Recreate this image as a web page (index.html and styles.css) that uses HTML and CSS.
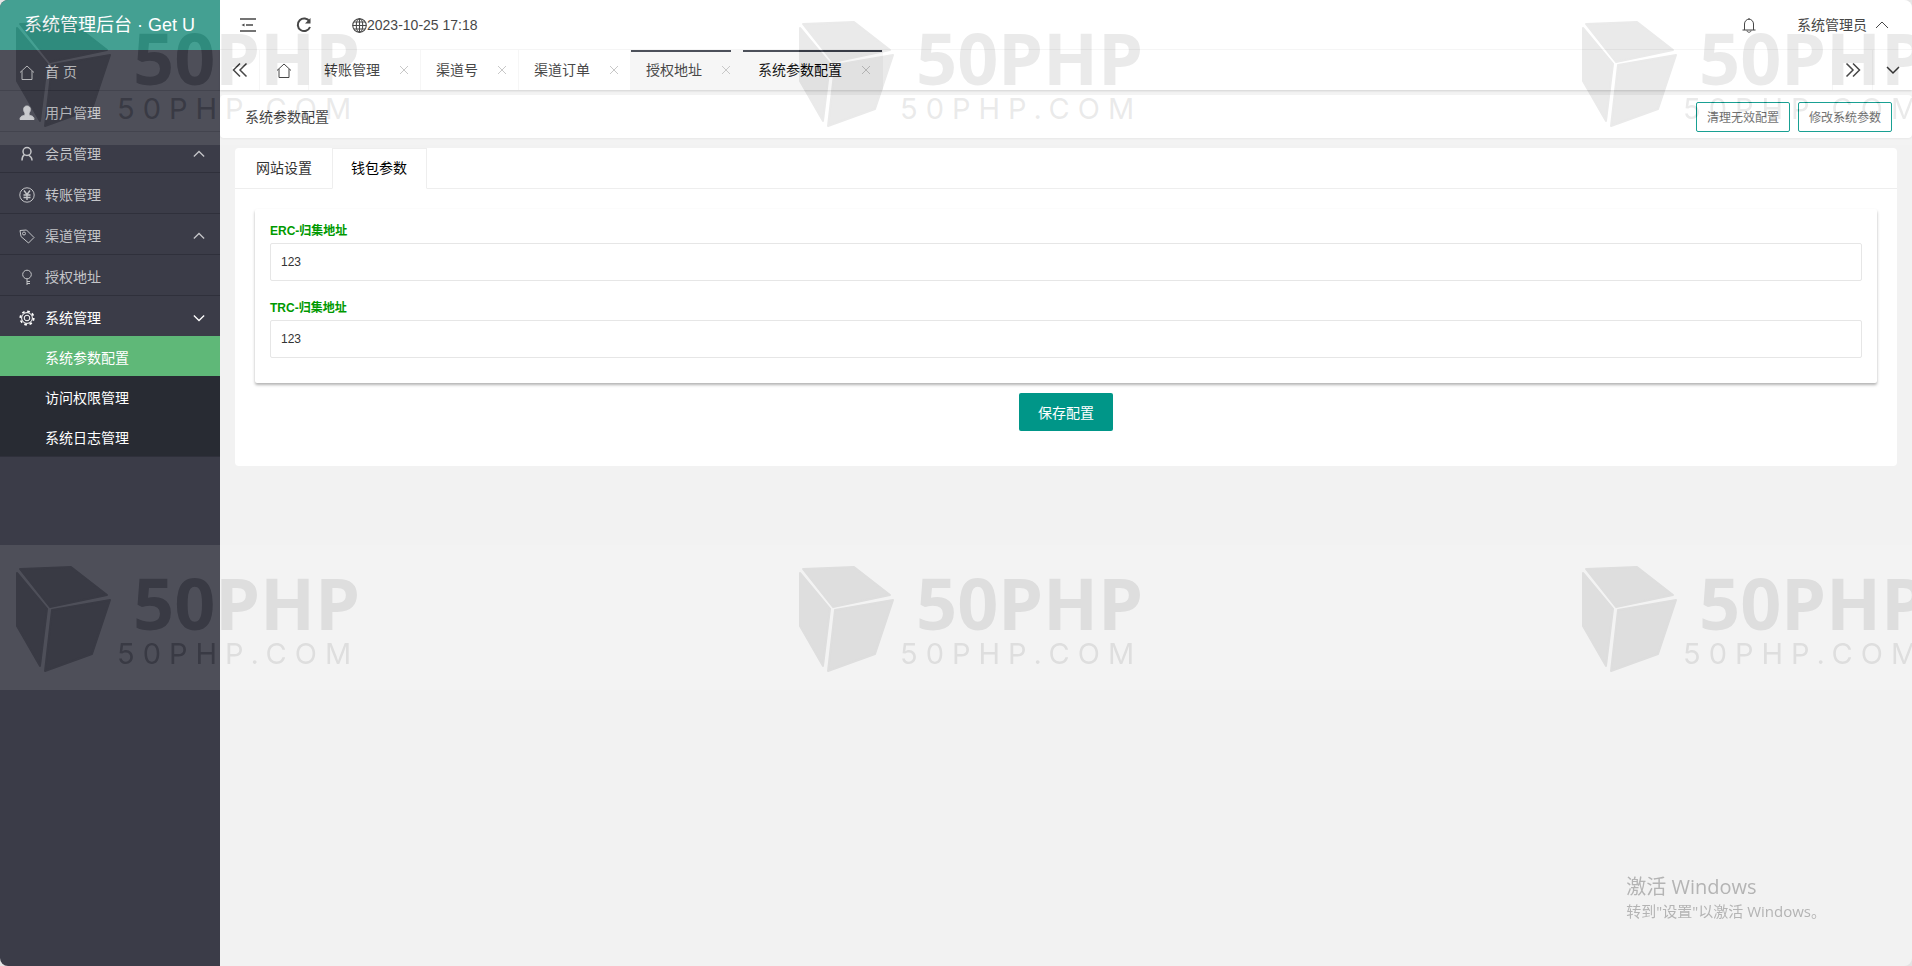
FILE: index.html
```html
<!DOCTYPE html>
<html lang="zh-CN">
<head>
    <meta charset="UTF-8">
    <meta name="viewport" content="width=device-width, initial-scale=1.0">
    <title>系统管理后台</title>
    <link rel="stylesheet" href="styles.css">
</head>
<body>
    <!-- 公用图形 -->
    <svg class="defs" aria-hidden="true">
        <symbol id="home" viewBox="0 0 16 16"><path d="M1 8.500 8 2l7 6.500M3 7v8.500h10V7"/></symbol>
        <symbol id="up" viewBox="0 0 14 14"><path d="M1 10l6-6 6 6"/></symbol>
        <symbol id="down" viewBox="0 0 14 14"><path d="M1 4l6 6 6-6"/></symbol>
        <symbol id="close" viewBox="0 0 10 10"><path d="M1 1l8 8M9 1L1 9"/></symbol>
        <symbol id="cube" viewBox="0 0 98 108">
            <path d="M5 4 56 2 92 30 35 42Z"/>
            <path d="M2 8 32 44 25 101 2 61Z"/>
            <path d="M37 45 95 35 77 89 30 106Z"/>
        </symbol>
    </svg>

    <div class="layout">
        <aside class="side">
            <div class="logo">系统管理后台 · Get U</div>
            <nav>
                <ul class="menu">
                    <li><a href="#"><svg class="icon"><use href="#home"/></svg>首 页</a></li>
                    <li><a href="#"><svg class="icon solid" viewBox="0 0 16 16" stroke="none"><path d="M8 1c2.300 0 3.300 1.500 3.300 3.500 0 1.700-.6 2.700-1.300 3.500v2.200c2 .5 5 .7 5 4.300H1c0-3.600 3-3.800 5-4.300V8C5.300 7.200 4.700 6.200 4.700 4.500c0-2 1-3.500 3.300-3.500z"/></svg>用户管理</a></li>
                    <li><a href="#"><svg class="icon bold" viewBox="0 0 16 16"><circle cx="8" cy="5.500" r="4"/><path d="M5.500 8.700C3.500 10 3 12 3 14.500M9.500 9.200C12 10.500 13 12 13 14.500"/></svg>会员管理<svg class="arrow"><use href="#up"/></svg></a></li>
                    <li><a href="#"><svg class="icon" viewBox="0 0 16 16"><circle cx="8" cy="8" r="7.200"/><path d="M5 3.500l3 4 3-4M8 7.500V13M4.500 8h7M4.500 10.500h7" stroke-width="1.400"/></svg>转账管理</a></li>
                    <li><a href="#"><svg class="icon" viewBox="0 0 16 16"><path d="M1 2.500 7.500 2l7.500 7.500-5.500 5.500L2 8.500z"/><circle cx="5" cy="5.500" r="1.500"/></svg>渠道管理<svg class="arrow"><use href="#up"/></svg></a></li>
                    <li><a href="#"><svg class="icon" viewBox="0 0 16 16"><circle cx="8" cy="5.500" r="4.300"/><path d="M8 10v6M8 12.500h3M8 14.500h3"/></svg>授权地址</a></li>
                    <li class="open">
                        <a href="#"><svg class="icon" viewBox="0 0 16 16"><circle cx="8" cy="8" r="2.800"/><circle cx="8" cy="8" r="5.400"/><circle cx="8" cy="8" r="6.700" stroke-width="1.800" stroke-dasharray="2.630 2.630"/></svg>系统管理<svg class="arrow"><use href="#down"/></svg></a>
                        <ul class="submenu">
                            <li><a class="active" href="#">系统参数配置</a></li>
                            <li><a href="#">访问权限管理</a></li>
                            <li><a href="#">系统日志管理</a></li>
                        </ul>
                    </li>
                </ul>
            </nav>
        </aside>

        <div class="main">
            <header class="topbar">
                <button type="button" aria-label="收起菜单"><svg class="icon bold" viewBox="0 0 16 16"><path d="M0 2h16M6 8h7M0 14h16"/><path class="fill" d="M1.500 8l3-1.500v3z" stroke="none"/></svg></button>
                <button type="button" aria-label="刷新"><svg class="icon thick" viewBox="0 0 16 16"><path d="M13.500 4.500A6.300 6.300 0 1 0 14 10"/><path class="fill" d="M14.500 1v5.500H9z" stroke="none"/></svg></button>
                <span class="clock"><svg viewBox="0 0 14 14"><circle cx="7" cy="7" r="6.300"/><ellipse cx="7" cy="7" rx="3" ry="6.300"/><path d="M7 .5v13M.5 7h13M1.700 3.800h10.600M1.700 10.200h10.600"/></svg>2023-10-25 17:18</span>
                <button class="bell" type="button" aria-label="消息"><svg class="icon" viewBox="0 0 16 16"><path d="M1.500 13h13M3.500 13V7a4.500 4.800 0 0 1 9 0v6M6 13.500c0 2.300 4 2.300 4 0M8 1v1.500"/></svg></button>
                <a class="user" href="#">系统管理员 <svg class="arrow"><use href="#up"/></svg></a>
            </header>

            <div class="pagetabs">
                <button class="ctl prev" type="button" aria-label="向左"><svg class="icon bold" viewBox="0 0 16 16"><path d="M8 1.500 1.500 8 8 14.500M14.500 1.500 8 8l6.500 6.500"/></svg></button>
                <ul>
                    <li class="home"><a href="#" aria-label="首页"><svg class="icon"><use href="#home"/></svg></a></li>
                    <li><a href="#">转账管理</a><button type="button" aria-label="关闭"><svg><use href="#close"/></svg></button></li>
                    <li><a href="#">渠道号</a><button type="button" aria-label="关闭"><svg><use href="#close"/></svg></button></li>
                    <li><a href="#">渠道订单</a><button type="button" aria-label="关闭"><svg><use href="#close"/></svg></button></li>
                    <li class="hover"><a href="#">授权地址</a><button type="button" aria-label="关闭"><svg><use href="#close"/></svg></button></li>
                    <li class="current"><a href="#">系统参数配置</a><button type="button" aria-label="关闭"><svg><use href="#close"/></svg></button></li>
                </ul>
                <button class="ctl next" type="button" aria-label="向右"><svg class="icon bold" viewBox="0 0 16 16"><path d="M1.500 1.500 8 8l-6.500 6.500M8 1.500 14.500 8 8 14.500"/></svg></button>
                <button class="ctl more" type="button" aria-label="更多"><svg class="arrow bold"><use href="#down"/></svg></button>
            </div>

            <div class="titlebar">
                <h1>系统参数配置</h1>
                <button type="button">清理无效配置</button>
                <button type="button">修改系统参数</button>
            </div>

            <main class="card">
                <ul class="tabs">
                    <li><a href="#">网站设置</a></li>
                    <li class="current"><a href="#">钱包参数</a></li>
                </ul>
                <form>
                    <div class="fields">
                        <label for="erc">ERC-归集地址</label>
                        <input id="erc" type="text" value="123">
                        <label for="trc">TRC-归集地址</label>
                        <input id="trc" type="text" value="123">
                    </div>
                    <button class="save" type="button">保存配置</button>
                </form>
            </main>
        </div>
    </div>

    <!-- 水印 -->
    <div class="marks">
        <div class="mark"><svg><use href="#cube"/></svg><p><b>50PHP</b><span>50PHP.COM</span></p></div>
        <div class="mark"><svg><use href="#cube"/></svg><p><b>50PHP</b><span>50PHP.COM</span></p></div>
        <div class="mark"><svg><use href="#cube"/></svg><p><b>50PHP</b><span>50PHP.COM</span></p></div>
        <div class="mark"><svg><use href="#cube"/></svg><p><b>50PHP</b><span>50PHP.COM</span></p></div>
        <div class="mark"><svg><use href="#cube"/></svg><p><b>50PHP</b><span>50PHP.COM</span></p></div>
        <div class="mark"><svg><use href="#cube"/></svg><p><b>50PHP</b><span>50PHP.COM</span></p></div>
    </div>

    <div class="activate">
        <strong>激活 Windows</strong>
        <span>转到"设置"以激活 Windows。</span>
    </div>
</body>
</html>
```

FILE: styles.css
```css
* {
    box-sizing: border-box;
}

body {
    margin: 0;
    background: #e4e4e4;
    color: #333;
    font: 14px/24px "Liberation Sans", "Noto Sans CJK SC", sans-serif;
}

ul, h1, p {
    margin: 0;
    padding: 0;
    list-style: none;
}

a {
    color: inherit;
    text-decoration: none;
}

button {
    padding: 0;
    border: none;
    background: none;
    color: inherit;
    font: inherit;
    cursor: pointer;
}

svg {
    display: block;
    flex: none;
    fill: none;
    stroke: currentColor;
    stroke-width: 1;
}

.defs {
    position: absolute;
    width: 0;
    height: 0;
}

.icon {
    width: 16px;
    height: 16px;
}

.arrow {
    width: 14px;
    height: 14px;
}

.bold {
    stroke-width: 1.5;
}

.thick {
    stroke-width: 2;
}

.solid, .fill {
    fill: currentColor;
}

.layout {
    display: flex;
    min-height: 100vh;
    border-radius: 8px;
    background: #f2f2f2;
    overflow: hidden;
}

/* 侧边栏 */
.side {
    flex: none;
    width: 220px;
    background: #3b3c48;
}

.logo {
    height: 50px;
    padding-left: 24px;
    background: #309687;
    color: #fff;
    font-size: 18px;
    line-height: 50px;
}

.menu > li {
    border-bottom: 1px solid #2f303b;
}

.menu a {
    display: flex;
    align-items: center;
    height: 40px;
    padding: 3px 15px 0 19px;
    color: #c4c5c8;
}

.menu .icon {
    margin-right: 10px;
}

.menu .arrow {
    width: 12px;
    height: 12px;
    margin-left: auto;
    stroke-width: 1.5;
}

.menu .open > a {
    color: #fff;
}

.submenu {
    background: #282b33;
}

.submenu a {
    padding-left: 45px;
    color: #fff;
}

.submenu .active {
    background: #5fb878;
}

/* 顶部 */
.main {
    flex: 1;
    min-width: 0;
}

.topbar {
    display: flex;
    align-items: center;
    gap: 40px;
    height: 50px;
    padding: 0 23px 0 20px;
    border-bottom: 1px solid #f6f6f6;
    background: #fff;
}

.clock, .user {
    display: flex;
    align-items: center;
    padding-top: 1px;
}

.clock svg {
    width: 15px;
    height: 15px;
}

.bell {
    margin-left: auto;
}

.user {
    gap: 8px;
}

.pagetabs {
    display: flex;
    height: 40px;
    background: #fff;
    box-shadow: 0 1px 2px rgba(0, 0, 0, .15);
}

.pagetabs ul {
    display: flex;
    flex: 1;
}

.pagetabs li {
    display: flex;
    align-items: center;
    gap: 19px;
    padding: 0 11px 0 15px;
    border-right: 1px solid #f6f6f6;
}

.pagetabs .home {
    padding: 0 16px;
}

.pagetabs li svg {
    width: 10px;
    height: 10px;
}

.pagetabs li button {
    color: #c2c2c2;
}

.pagetabs .home svg {
    width: 16px;
    height: 16px;
}

.pagetabs .hover, .pagetabs .current {
    background: #f6f6f6;
    background-image: linear-gradient(#393d49, #393d49);
    background-size: 100% 2px;
    background-repeat: no-repeat;
}

.pagetabs .hover {
    background-size: 100px 2px;
}

.pagetabs .current {
    color: #000;
}

.ctl {
    display: flex;
    justify-content: center;
    align-items: center;
    width: 40px;
    border-left: 1px solid #f6f6f6;
}

.prev {
    border: none;
    border-right: 1px solid #f6f6f6;
}

.titlebar {
    display: flex;
    align-items: center;
    gap: 8px;
    height: 43px;
    margin-top: 5px;
    padding: 0 20px 0 25px;
    border-radius: 4px;
    background: #fff;
    box-shadow: 0 1px 2px rgba(0, 0, 0, .05);
}

.titlebar h1 {
    margin-right: auto;
    font-size: 14px;
    font-weight: normal;
}

.titlebar button {
    height: 30px;
    padding: 2px 10px 0;
    border: 1px solid #009688;
    border-radius: 2px;
    color: #666;
    font-size: 12px;
}

/* 内容 */
.card {
    margin: 10px 15px;
    padding-bottom: 35px;
    border-radius: 4px;
    background: #fff;
}

.tabs {
    display: flex;
    height: 41px;
    border-bottom: 1px solid #eee;
}

.tabs li {
    height: 41px;
    padding: 0 19px 0 20px;
    border: 1px solid transparent;
    line-height: 38px;
}

.tabs .current {
    padding-left: 18px;
    border-color: #eee;
    border-bottom-color: #fff;
    color: #000;
}

.card form {
    padding: 20px 20px 0;
}

.fields {
    padding: 10px 15px;
    border-radius: 2px;
    box-shadow: 0 2px 3px rgba(0, 0, 0, .3);
}

.fields label {
    display: block;
    color: #090;
    font-size: 12px;
    font-weight: bold;
}

.fields input {
    display: block;
    width: 100%;
    height: 38px;
    margin-bottom: 15px;
    padding: 0 10px;
    border: 1px solid #e6e6e6;
    border-radius: 2px;
    color: #333;
    font: inherit;
    font-size: 12px;
}

.save {
    display: block;
    height: 38px;
    margin: 10px auto 0;
    padding: 2px 19px 0;
    border-radius: 2px;
    background: #009688;
    color: #fff;
}

/* 水印 */
.marks {
    position: absolute;
    inset: 0;
    display: grid;
    grid-template-columns: repeat(3, 783px);
    grid-template-rows: 545px 545px;
    align-items: start;
    overflow: hidden;
    opacity: .1;
    pointer-events: none;
}

.mark {
    display: flex;
    height: 145px;
    padding: 20px 0 0 15px;
    background: #fff;
    color: #282828;
}

.mark svg {
    width: 98px;
    height: 108px;
    fill: currentColor;
    stroke-width: 2;
    stroke-linejoin: round;
}

.mark p {
    display: flex;
    flex-direction: column;
    padding-left: 4px;
    font-family: "Noto Sans", sans-serif;
}

.mark b {
    padding-left: 16px;
    font-size: 72px;
    line-height: 74px;
}

.mark span {
    font-family: Inter, sans-serif;
    font-size: 29px;
    letter-spacing: 8px;
    line-height: 30px;
}

.activate {
    position: absolute;
    right: 86px;
    bottom: 43px;
    display: flex;
    flex-direction: column;
    color: #b4b4b4;
    font-family: "Open Sans", "Noto Sans CJK SC", sans-serif;
    font-size: 15px;
}

.activate strong {
    font-size: 20px;
    font-weight: normal;
}
```
